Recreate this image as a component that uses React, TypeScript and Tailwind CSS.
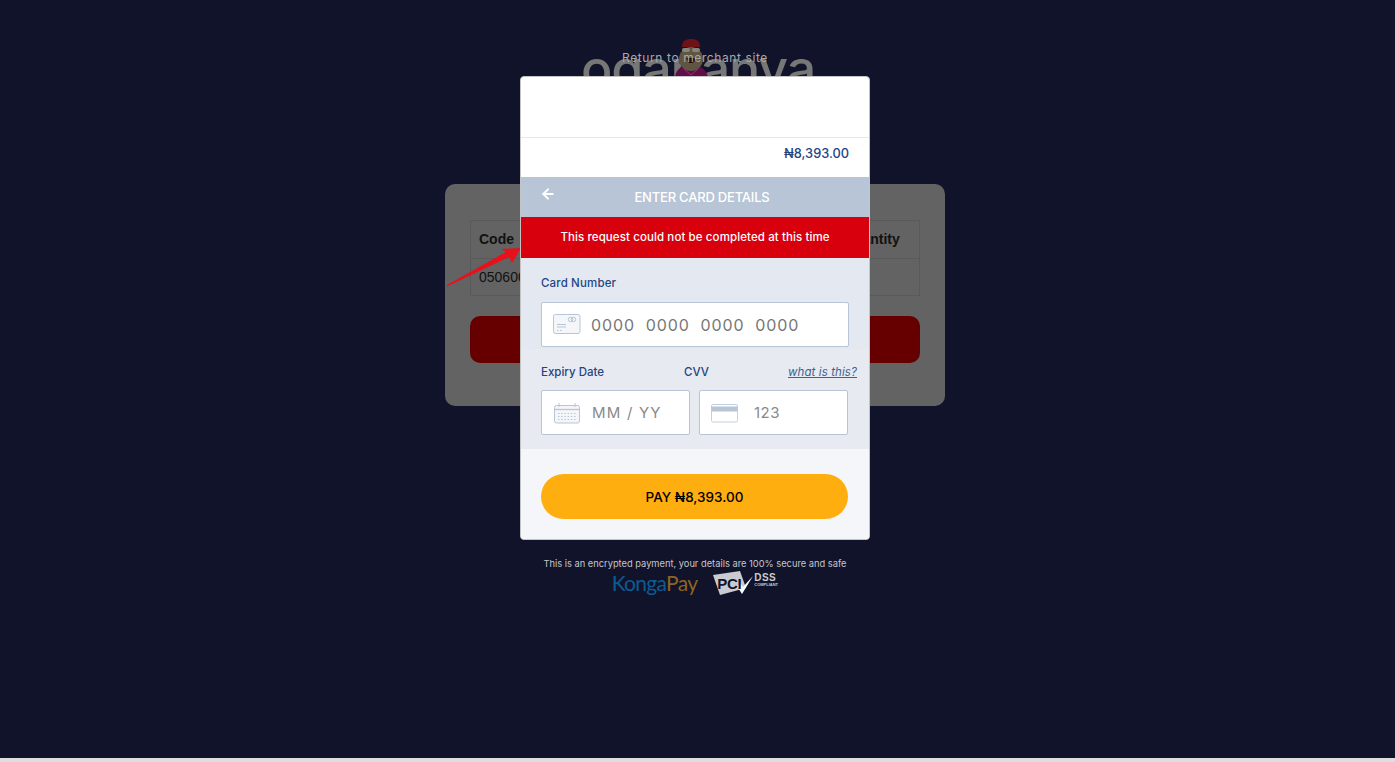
import { ArrowLeft } from 'lucide-react';

const montserrat = "font-['Inter','Open_Sans',sans-serif]";

function Mascot() {
  return (
    <svg width="36" height="38" viewBox="0 0 36 38" className="absolute left-[92px] top-[-1px]">
      <path d="M2 38 C3 30 9 26 18 26 C27 26 33 30 35 38 Z" fill="#5f0e48" />
      <ellipse cx="18" cy="20" rx="12" ry="12" fill="#5e5642" />
      <path d="M9 8 C9 2 12 0 18 0 C24 0 27 2 27 8 Z" fill="#6e1216" />
      <rect x="9" y="9" width="8" height="4" rx="2" fill="#85857c" />
      <rect x="19" y="9" width="8" height="4" rx="2" fill="#85857c" />
      <path d="M13 19 L24 19 L20 24 L16 24 Z" fill="#2a0c0c" />
      <path d="M11 30 L18 36 L25 30" fill="none" stroke="#9a3268" strokeWidth="1" />
    </svg>
  );
}

function CardIcon() {
  return (
    <svg width="28" height="21" viewBox="0 0 28 21" fill="none" stroke="#b8c5d6" strokeWidth="1">
      <rect x="0.5" y="0.5" width="26.5" height="19" rx="2" fill="#f4f6f9" />
      <circle cx="17.5" cy="5.5" r="2.2" />
      <circle cx="20.5" cy="5.5" r="2.2" />
      <path d="M4 10.5 H13 M4 13 H13" strokeWidth="1.2" />
      <path d="M4 16.5 H5.5 M7 16.5 H8.5" strokeWidth="1" />
    </svg>
  );
}

function CalendarIcon() {
  return (
    <svg width="27" height="21" viewBox="0 0 27 21" fill="none" stroke="#b8c5d6" strokeWidth="1">
      <rect x="0.5" y="2.5" width="25" height="17.5" rx="2" fill="#f4f6f9" />
      <path d="M0.5 6.5 H25.5" strokeWidth="1.3" />
      <path d="M5 0 V4 M21 0 V4" />
      <path d="M4 10.5 H22 M4 13.5 H22 M4 16.5 H22" strokeWidth="1" strokeDasharray="1.5 1.7" />
    </svg>
  );
}

function CvvIcon() {
  return (
    <svg width="27" height="19" viewBox="0 0 27 19" fill="none" stroke="#c5d0de" strokeWidth="1">
      <rect x="0.5" y="0.5" width="26" height="17.5" rx="1.5" fill="#ffffff" />
      <rect x="0.5" y="2.5" width="26" height="5" fill="#b8c5d6" stroke="none" />
    </svg>
  );
}

function PciLogo() {
  return (
    <div className="relative h-[24px] w-[64px]">
      <svg width="44" height="24" viewBox="0 0 44 24" className="absolute left-0 top-0">
        <polygon points="0,4 27,0 33,17 7,24" fill="#c9cbd0" />
        <path d="M24 15 L29 23 L40 5 L30 16 L28 13 Z" fill="#ffffff" />
      </svg>
      <span className="absolute left-[4px] top-[5px] font-['Liberation_Sans',sans-serif] text-[15px] font-bold leading-[15px] tracking-[-0.3px] text-[#10132a]">
        PCI
      </span>
      <span className="absolute left-[41px] top-[1px] font-['Liberation_Sans',sans-serif] text-[10px] font-bold leading-[11px] tracking-[0.4px] text-[#c9cbd0]">
        DSS
      </span>
      <span className="absolute left-[41px] top-[11px] font-['Liberation_Sans',sans-serif] text-[4px] font-bold leading-[5px] text-[#c9cbd0]">
        COMPLIANT
      </span>
    </div>
  );
}

export default function App() {
  return (
    <div className="relative h-[762px] overflow-hidden bg-[#10132a]">
      {/* page behind the overlay */}
      <div className="flex h-[758px] w-[1390px] flex-col items-center pt-[40px]">
        <div className="relative ml-[6px] h-[44px] w-[234px]">
          <div className="flex justify-between font-['Inter',sans-serif] text-[52px] font-medium leading-[58px] tracking-[-1.2px] text-[#777777]">
            <span>ogar</span>
            <span>anya</span>
          </div>
          <Mascot />
        </div>
        <div className="mt-[100px] w-[500px] rounded-[10px] bg-[#636363] px-[25px] pb-[43px] pt-[36px] font-['Liberation_Sans',sans-serif]">
          <table className="w-full border-collapse text-[14px] text-[#111111]">
            <thead>
              <tr className="h-[38px]">
                <th className="w-[200px] border border-[#595959] px-2 text-left font-bold">Code</th>
                <th className="w-[164px] border border-[#595959]"></th>
                <th className="border border-[#595959] px-2 text-left font-bold">Quantity</th>
              </tr>
            </thead>
            <tbody>
              <tr className="h-[37px]">
                <td className="border border-[#595959] px-2">05060012</td>
                <td className="border border-[#595959]"></td>
                <td className="border border-[#595959]"></td>
              </tr>
            </tbody>
          </table>
          <div className="mt-[20px] h-[47px] rounded-[10px] bg-[#660000]"></div>
        </div>
      </div>
      <div className="h-[4px] bg-[#dedede]"></div>

      {/* red annotation arrow */}
      <svg width="80" height="45" viewBox="0 0 80 45" className="absolute left-[445px] top-[245px]">
        <polygon points="2,40 61,7 56,4 76,3 67,18 64,12 2,41.5" fill="#e8101a" />
      </svg>

      {/* payment modal */}
      <div className={`absolute left-0 top-[50px] flex w-[1390px] flex-col items-center ${montserrat}`}>
        <div className="h-[26px] text-[12px] leading-[16px] tracking-[0.6px] text-[#a8a8a8]">Return to merchant site</div>
        <div className="w-[350px] overflow-hidden rounded-[4px] border border-[#c4c4c4] bg-white">
          <div className="box-content h-[60px] border-b border-[#e6e8ec]"></div>
          <div className="flex h-[39px] items-center justify-end pb-[8px] pr-[20px] text-[12.8px] font-medium text-[#1f4583]">
            ₦8,393.00
          </div>
          <div className="relative flex h-[40px] items-center justify-center bg-[#b8c5d6] pl-[14px] pt-[1px] text-[13px] font-medium tracking-[-0.2px] text-white">
            <ArrowLeft className="absolute left-[19px] top-[9px] h-[16px] w-[16px]" strokeWidth={3} />
            ENTER CARD DETAILS
          </div>
          <div className="flex h-[41px] items-center justify-center bg-[#d9000d] text-[11.5px] font-medium tracking-[0.1px] text-white">
            This request could not be completed at this time
          </div>
          <div className="bg-[#e4e9f1] px-[20px] pb-[2px] pt-[18px]">
            <div className="h-[26px] text-[11.5px] font-medium leading-[14px] tracking-[0.15px] text-[#1f4583]">Card Number</div>
            <div className="flex h-[45px] w-[308px] items-center gap-[10px] rounded-[2px] border border-[#b8c5d6] bg-white pl-[11px] text-[16px] tracking-[0.9px] text-[#777777]">
              <CardIcon />
              <span className="whitespace-pre">0000  0000  0000  0000</span>
            </div>
          </div>
          <div className="bg-[#e7eaf0] px-[20px] pb-[14px] pt-[15px]">
            <div className="flex h-[26px] pt-[1px] text-[11.5px] font-medium leading-[14px] text-[#1f4583]">
              <span className="w-[143px]">Expiry Date</span>
              <span>CVV</span>
              <span className="ml-auto mr-[-8px] text-[11.5px] font-normal italic tracking-[0.1px] text-[#3d6294] underline">what is this?</span>
            </div>
            <div className="flex w-[307px] justify-between">
              <div className="flex h-[45px] w-[149px] items-center gap-[11px] rounded-[2px] border border-[#b8c5d6] bg-white pl-[12px] pt-[1px] text-[15px] tracking-[1.2px] text-[#8a8a8a]">
                <CalendarIcon />
                <span>MM / YY</span>
              </div>
              <div className="flex h-[45px] w-[149px] items-center gap-[16px] rounded-[2px] border border-[#b8c5d6] bg-white pl-[11px] pt-[1px] text-[15px] tracking-[0.5px] text-[#8a8a8a]">
                <CvvIcon />
                <span>123</span>
              </div>
            </div>
          </div>
          <div className="bg-[#f4f6f9] px-[20px] pb-[20px] pt-[25px]">
            <div className="flex h-[45px] w-[307px] items-center justify-center rounded-full bg-[#ffae0f] pt-[1px] text-[13.5px] font-medium text-black">
              PAY ₦8,393.00
            </div>
          </div>
        </div>
        <div className="mt-[17px] text-[9.3px] leading-[14px] text-[#c4c6cc]">
          This is an encrypted payment, your details are 100% secure and safe
        </div>
        <div className="flex h-[24px] items-center gap-[16px] pr-[1px]">
          <span className="font-['Lato',sans-serif] text-[21px] font-normal leading-[24px] tracking-[-0.7px] text-[#0b5c94]">
            Konga<span className="text-[#8f6420]">Pay</span>
          </span>
          <PciLogo />
        </div>
      </div>
    </div>
  );
}
